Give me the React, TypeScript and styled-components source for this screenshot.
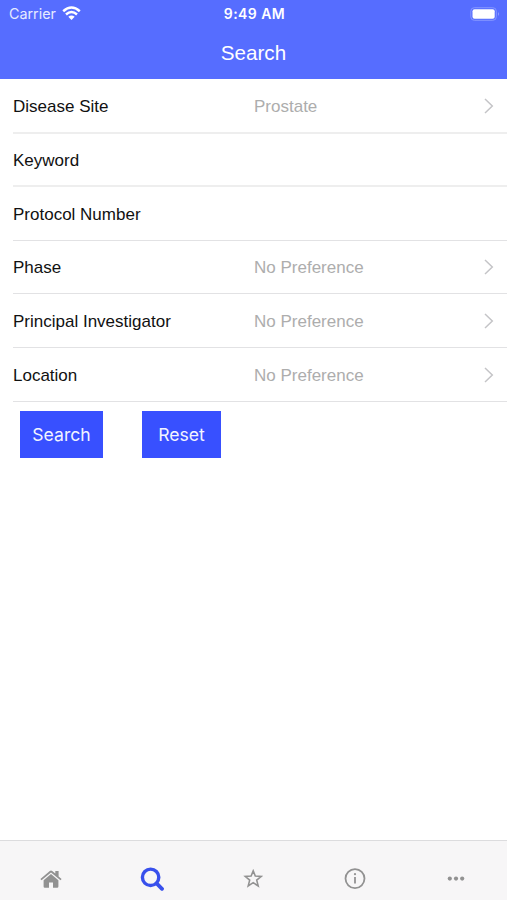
import React from "react";
import styled, { createGlobalStyle } from "styled-components";

const GlobalStyle = createGlobalStyle`
  * { box-sizing: border-box; }
  body { margin: 0; background: #fff; }
`;

const Screen = styled.div`
  display: flex;
  flex-direction: column;
  width: 100%;
  height: 100vh;
  overflow: hidden;
  font-family: "Liberation Sans", Arial, sans-serif;
  background: #fff;
`;

const Header = styled.header`
  display: flex;
  flex-direction: column;
  flex: none;
  height: 79px;
  background: #566dff;
  color: #fff;
`;

const StatusBar = styled.div`
  display: grid;
  grid-template-columns: 1fr auto 1fr;
  align-items: center;
  height: 27px;
  padding: 0 7px 0 9px;
  font-family: Inter, sans-serif;
  font-size: 14.3px;
`;

const Carrier = styled.div`
  display: flex;
  align-items: center;
  gap: 6px;
  color: #e6eaff;
`;

const Clock = styled.div`
  font-size: 14px;
  font-weight: 600;
  letter-spacing: 0.45px;
`;

const Battery = styled.svg`
  justify-self: end;
`;

const Title = styled.h1`
  margin: 0;
  text-align: center;
  font-size: 20.6px;
  font-weight: 400;
  line-height: 52px;
`;

const Form = styled.main`
  flex: 1;
`;

const Field = styled.div<{ $height: number; $line: number }>`
  display: grid;
  grid-template-columns: 241px 1fr 10px;
  align-items: center;
  height: ${(p) => p.$height}px;
  margin-left: 13px;
  padding-right: 13px;
  border-bottom: ${(p) => p.$line}px solid ${(p) => (p.$line > 1 ? "#eeeeee" : "#e2e2e4")};
  font-size: 17px;
`;

const Label = styled.span`
  padding-top: 2px;
  color: #111;
  white-space: nowrap;
`;

const Value = styled.span`
  padding-top: 2px;
  color: #adadad;
`;

const Actions = styled.div`
  display: flex;
  gap: 39px;
  padding: 9px 20px;
`;

const Button = styled.button<{ $width: number }>`
  width: ${(p) => p.$width}px;
  height: 47px;
  padding: 0;
  border: 0;
  background: #3850ff;
  color: #f2f4ff;
  font-family: Inter, sans-serif;
  font-size: 17.6px;
`;

const TabBar = styled.nav`
  display: grid;
  grid-template-columns: repeat(5, 1fr);
  flex: none;
  height: 60px;
  padding-top: 15px;
  border-top: 1px solid #dcdcde;
  background: #f7f6f7;
`;

const Tab = styled.div<{ $active?: boolean }>`
  display: flex;
  align-items: center;
  justify-content: center;
  height: 45px;
  color: ${(p) => (p.$active ? "#3850ec" : "#929292")};
`;

const fields = [
  { label: "Disease Site", value: "Prostate", height: 55, line: 2 },
  { label: "Keyword", height: 53, line: 2 },
  { label: "Protocol Number", height: 54, line: 1 },
  { label: "Phase", value: "No Preference", height: 53, line: 1 },
  { label: "Principal Investigator", value: "No Preference", height: 54, line: 1 },
  { label: "Location", value: "No Preference", height: 54, line: 1 },
];

const Wifi = () => (
  <svg width="19" height="15" viewBox="0 0 19 15" fill="none" stroke="#fff" strokeWidth="2.5">
    <path d="M1.2 5.2Q9.5-2.2 17.8 5.2M4 8.5Q9.5 3.5 15 8.5" />
    <path d="M6.3 10.8Q9.5 8 12.7 10.8L9.5 14Z" fill="#fff" stroke="none" />
  </svg>
);

const Chevron = () => (
  <svg width="10" height="16" viewBox="0 0 10 16" fill="none" stroke="#c4c4c7" strokeWidth="1.5">
    <path d="M1 1L8.3 8L1 15" />
  </svg>
);

const HomeIcon = () => (
  <svg width="22" height="18" viewBox="0 0 22 18" fill="currentColor">
    <path d="M11 4.1L18.4 10.2V16.6Q18.4 17.8 17.2 17.8H13V12.5H9V17.8H4.8Q3.6 17.8 3.6 16.6V10.2Z" />
    <path d="M.4 9L9.8 1Q11 .1 12.2 1L15.3 3.6V1H18.6V6.4L21.6 9L20.5 10.3L11 2.5L1.5 10.3Z" />
  </svg>
);

const SearchIcon = () => (
  <svg width="24" height="24" viewBox="0 0 24 24" fill="none" stroke="currentColor">
    <circle cx="10.6" cy="10.3" r="8.2" strokeWidth="3.4" />
    <path d="M16.6 16.4L22 21.8" strokeWidth="3.8" strokeLinecap="round" />
  </svg>
);

const StarIcon = () => (
  <svg width="20" height="20" viewBox="0 0 20 20" fill="none" stroke="currentColor" strokeWidth="1.6">
    <path d="M10.2 1.9L12.3 7.1L18.1 7.5L13.7 11.1L15.2 16.9L10.2 13.7L5.2 16.9L6.7 11.1L2.3 7.5L8.1 7.1Z" />
  </svg>
);

const InfoIcon = () => (
  <svg width="22" height="22" viewBox="0 0 22 22" fill="none" stroke="currentColor" strokeWidth="1.8">
    <circle cx="11" cy="10.6" r="9.5" />
    <path d="M11 9V15.6" />
    <circle cx="11" cy="6.2" r="1.1" fill="currentColor" stroke="none" />
  </svg>
);

const MoreIcon = () => (
  <svg width="18" height="6" viewBox="0 0 18 6" fill="currentColor">
    <circle cx="2.8" cy="2.6" r="2.1" />
    <circle cx="9" cy="2.6" r="2.1" />
    <circle cx="15.2" cy="2.6" r="2.1" />
  </svg>
);

export default function App() {
  return (
    <Screen>
      <GlobalStyle />
      <Header>
        <StatusBar>
          <Carrier>
            Carrier
            <Wifi />
          </Carrier>
          <Clock>9:49 AM</Clock>
          <Battery width="30" height="14" viewBox="0 0 30 14">
            <rect x=".8" y=".7" width="25.5" height="12.6" rx="3.5" fill="none" stroke="#8697ff" />
            <rect x="2.5" y="2.3" width="22.2" height="9.4" rx="2" fill="#fff" />
            <path d="M28 4.8Q29.6 7 28 9.2Z" fill="#a6b1ff" />
          </Battery>
        </StatusBar>
        <Title>Search</Title>
      </Header>
      <Form>
        {fields.map((f) => (
          <Field key={f.label} $height={f.height} $line={f.line}>
            <Label>{f.label}</Label>
            <Value>{f.value}</Value>
            {f.value && <Chevron />}
          </Field>
        ))}
        <Actions>
          <Button $width={83}>Search</Button>
          <Button $width={79}>Reset</Button>
        </Actions>
      </Form>
      <TabBar>
        <Tab><HomeIcon /></Tab>
        <Tab $active><SearchIcon /></Tab>
        <Tab><StarIcon /></Tab>
        <Tab><InfoIcon /></Tab>
        <Tab><MoreIcon /></Tab>
      </TabBar>
    </Screen>
  );
}
